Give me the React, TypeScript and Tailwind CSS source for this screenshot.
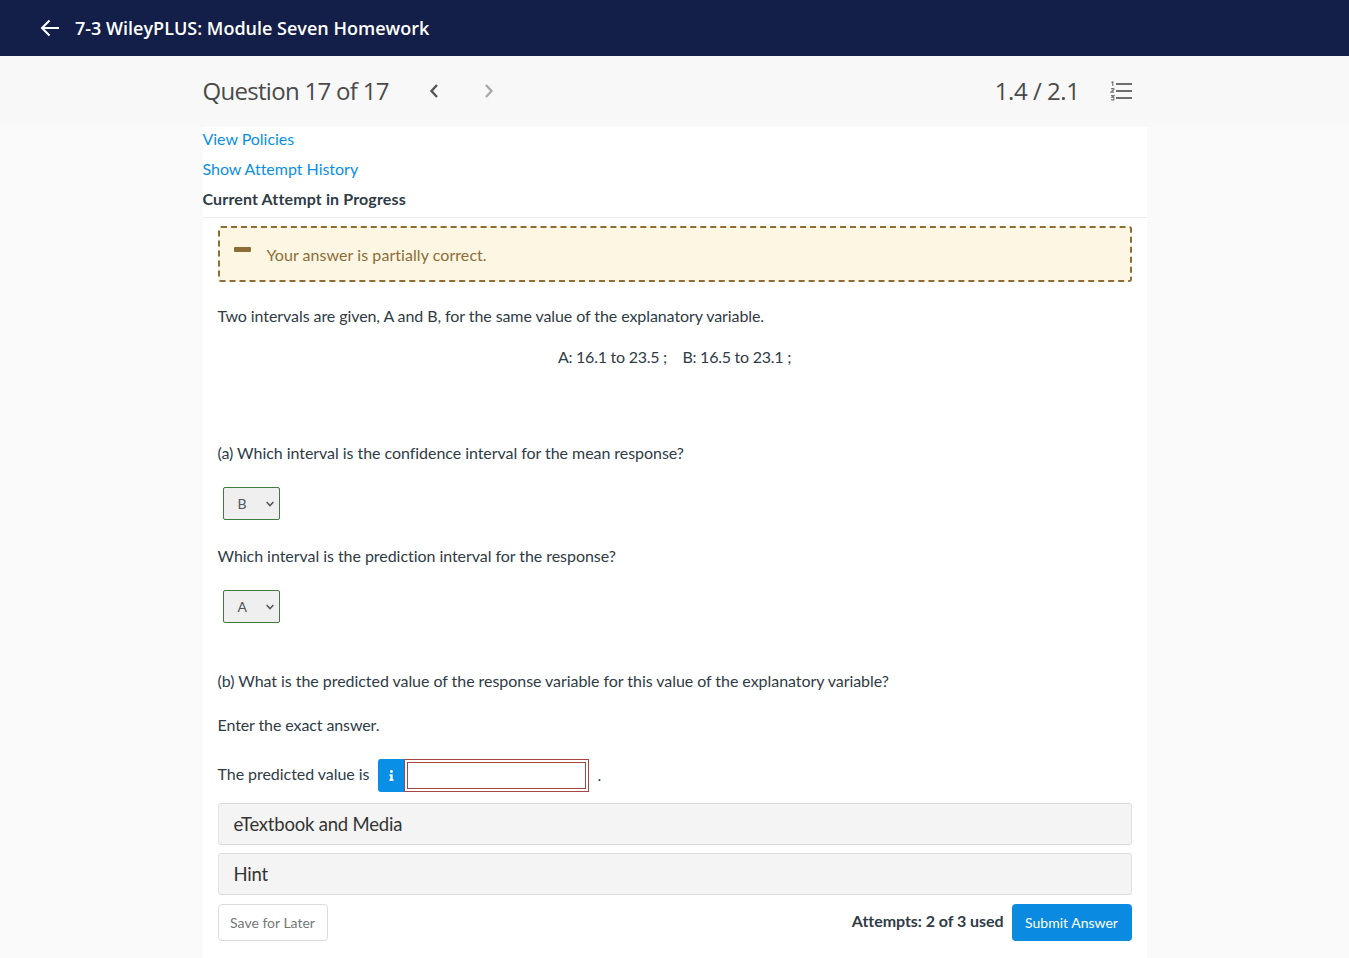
import React from "react";
import { FaInfo } from "react-icons/fa";

function ArrowLeft() {
  return (
    <svg width="20" height="18" viewBox="0 0 20 18" fill="none" stroke="#fff" strokeWidth="2" className="block">
      <path d="M19 9H2M9.5 1.5 2 9l7.5 7.5" />
    </svg>
  );
}

function Chevron({ dir, color }: { dir: "l" | "r"; color: string }) {
  return (
    <svg width="10" height="14" viewBox="0 0 10 14" fill="none" stroke={color} strokeWidth="2.4" className="block">
      <path d={dir === "l" ? "M8 1 2.5 7 8 13" : "M2 1 7.5 7 2 13"} />
    </svg>
  );
}

function ListIcon() {
  return (
    <svg width="22" height="20" viewBox="0 0 22 20" fill="none" className="block">
      <path d="M6 3h16M6 10h16M6 17h16" stroke="#6e6e6e" strokeWidth="2" />
      <path d="M1.5 1.6 2.8.9v4M1 7.6h2.8v.9L1 11.2h3M1 14.6h2.8L2 16.2h1.8v2.6H1" stroke="#777" strokeWidth="1.2" />
    </svg>
  );
}

function Select({ value }: { value: string }) {
  return (
    <div className="ml-[5px] flex h-[33px] w-[57px] items-center justify-between rounded-[2px] border border-[#3f7a3f] bg-[#efefef] pl-[14px] pr-[5px] text-[14px] text-[#555]">
      <span>{value}</span>
      <svg width="8" height="6" viewBox="0 0 8 6" fill="none" stroke="#555" strokeWidth="1.5">
        <path d="M.6 1 4 4.6 7.4 1" />
      </svg>
    </div>
  );
}

function Panel({ title }: { title: string }) {
  return (
    <div className="flex h-[42px] items-center rounded-[3px] border border-[#e4e4e4] border-y-[#dcdcdc] bg-[#f4f4f4] pl-[15px] pt-[2px] text-[18.5px] tracking-[-0.2px] text-[#333]">
      {title}
    </div>
  );
}

export default function App() {
  return (
    <div className="h-[958px] overflow-hidden bg-[#fafafa] font-['Lato',sans-serif] text-[16px] tracking-[-0.05px] text-[#2f3b46]">
      <header className="flex h-14 items-center bg-[#141f49] pl-10 font-['Open_Sans',sans-serif] text-[18px] font-semibold tracking-normal text-white">
        <ArrowLeft />
        <span className="ml-[15px]">7-3 WileyPLUS: Module Seven Homework</span>
      </header>
      <div className="bg-[#f8f8f8]">
        <div className="mx-auto flex h-[71px] w-[944px] items-center pb-px font-['Open_Sans',sans-serif] tracking-normal text-[#4a4a4a]">
          <span className="text-[24px] tracking-[-0.7px]">Question 17 of 17</span>
          <span className="ml-10"><Chevron dir="l" color="#555" /></span>
          <span className="ml-[45px]"><Chevron dir="r" color="#aaa" /></span>
          <span className="ml-auto text-[24px] tracking-[-0.45px]">1.4 / 2.1</span>
          <span className="ml-[30px] mr-[15px]"><ListIcon /></span>
        </div>
      </div>
      <main className="mx-auto h-[831px] w-[944px] bg-white">
        <div className="flex h-6 items-center tracking-[-0.04px] text-[#0a8fe6]">View Policies</div>
        <div className="mt-[5px] flex h-[26px] items-center tracking-[-0.02px] text-[#0a8fe6]">Show Attempt History</div>
        <div className="mt-1 flex h-[26px] items-center font-bold tracking-[0.14px] text-[#2f3b46]">Current Attempt in Progress</div>
        <div className="mt-[5px] h-px bg-[#ececec]" />
        <div className="px-[15px]">
          <div className="mt-2 flex h-[56px] items-center rounded-[3px] border-2 border-dashed border-[#8c6d38] bg-[#fdf6e3] pt-px tracking-[0.06px] text-[#8c6d38]">
            <span className="ml-[14px] mb-[10px] h-[5px] w-[17px] rounded-[1px] bg-[#8c6d38]" />
            <span className="ml-4">Your answer is partially correct.</span>
          </div>
          <p className="mt-[23px] leading-[22px] tracking-[-0.08px]">Two intervals are given, A and B, for the same value of the explanatory variable.</p>
          <p className="mt-[19px] text-center leading-[22px] tracking-[-0.25px]">A: 16.1 to 23.5 ; &nbsp;&nbsp; B: 16.5 to 23.1 ;</p>
          <p className="mt-[74px] leading-[22px]">(a) Which interval is the confidence interval for the mean response?</p>
          <div className="mt-[23px]"><Select value="B" /></div>
          <p className="mt-[25px] leading-[22px]">Which interval is the prediction interval for the response?</p>
          <div className="mt-[23px]"><Select value="A" /></div>
          <p className="mt-[47px] leading-[22px]">(b) What is the predicted value of the response variable for this value of the explanatory variable?</p>
          <p className="mt-[22px] leading-[22px] tracking-[-0.1px]">Enter the exact answer.</p>
          <div className="mt-[23px] flex h-[33px] items-center">
            <span className="mb-1">The predicted value is</span>
            <span className="ml-[9px] flex h-[33px] w-[26px] items-center justify-center rounded-l-[3px] bg-[#0a8fe6] text-white"><FaInfo size={11} /></span>
            <div className="flex h-[33px] w-[185px] items-center justify-center border border-[#a94442]">
              <div className="h-[27px] w-[179px] border border-[#a94442] bg-white" />
            </div>
            <span className="ml-2 mb-px">.</span>
          </div>
          <div className="mt-[11px]"><Panel title="eTextbook and Media" /></div>
          <div className="mt-2"><Panel title="Hint" /></div>
          <div className="mt-[9px] flex items-center">
            <div className="flex h-[37px] w-[110px] items-center justify-center rounded-[4px] border border-[#dcdcdc] text-[14px] tracking-normal text-[#777]">Save for Later</div>
            <span className="ml-auto mb-1 font-bold">Attempts: 2 of 3 used</span>
            <div className="ml-2 flex h-[37px] w-[120px] items-center justify-center rounded-[4px] bg-[#0a8ae0] text-[14px] tracking-normal text-white">Submit Answer</div>
          </div>
        </div>
      </main>
    </div>
  );
}
